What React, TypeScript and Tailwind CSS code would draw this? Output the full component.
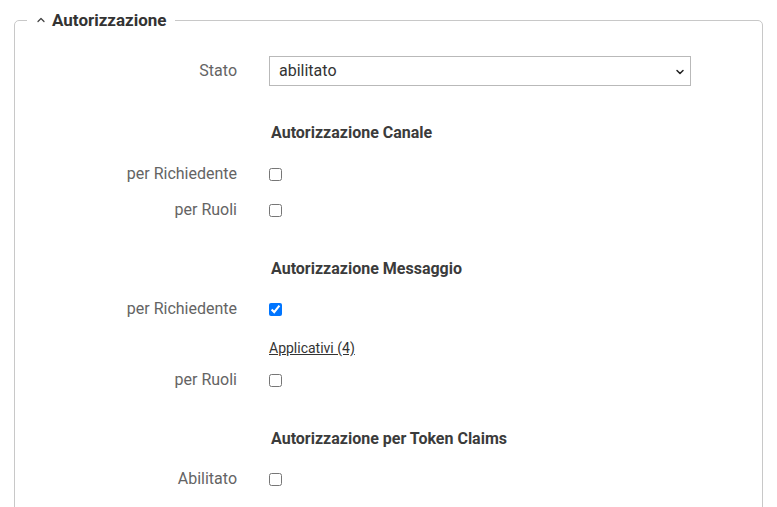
import { ChevronDown, ChevronUp } from "lucide-react";

function Row({ label, mt, children }: { label: string; mt: string; children: React.ReactNode }) {
  return (
    <div className={`flex items-center ${mt}`}>
      <div className="w-[222px] text-right text-[16px] leading-5 text-[#646464]">{label}</div>
      <div className="ml-[32px] flex items-center">{children}</div>
    </div>
  );
}

function Heading({ text, mt }: { text: string; mt: string }) {
  return (
    <div className={`flex ${mt}`}>
      <div className="w-[222px]" />
      <div className="ml-[34px] text-[16px] font-bold leading-5 text-[#3b3b3b]">{text}</div>
    </div>
  );
}

function Check({ checked = false }: { checked?: boolean }) {
  return <input type="checkbox" defaultChecked={checked} className="m-0 h-[13px] w-[13px]" />;
}

export default function App() {
  return (
    <div className="min-h-[507px] bg-white pl-[14px] pr-[14px] pt-[8px] font-['Roboto',sans-serif]">
      <fieldset className="m-0 h-[520px] w-[749px] rounded-[5px] border border-[#c8c8c8] px-0 pb-0 pt-0">
        <legend className="ml-[12px] flex h-6 items-center px-[8px] text-[17px] font-bold leading-6 text-[#333]">
          <ChevronUp size={12} strokeWidth={2.5} className="mr-[5px] text-[#444]" />
          Autorizzazione
        </legend>

        <Row label="Stato" mt="mt-[24px]">
          <div className="relative">
            <select className="h-[30px] w-[422px] appearance-none border border-[#b9b9b9] bg-white pl-[9px] text-[16px] text-[#333]">
              <option>abilitato</option>
              <option>disabilitato</option>
            </select>
            <ChevronDown size={12} strokeWidth={3} className="pointer-events-none absolute right-[5px] top-[10px] text-[#222]" />
          </div>
        </Row>

        <Heading text="Autorizzazione Canale" mt="mt-[37px]" />
        <Row label="per Richiedente" mt="mt-[21px]">
          <Check />
        </Row>
        <Row label="per Ruoli" mt="mt-[16px]">
          <Check />
        </Row>

        <Heading text="Autorizzazione Messaggio" mt="mt-[39px]" />
        <Row label="per Richiedente" mt="mt-[20px]">
          <Check checked />
        </Row>
        <div className="mt-[19px] flex">
          <div className="w-[222px]" />
          <a href="#" className="ml-[32px] text-[14px] leading-5 text-[#333] underline">
            Applicativi (4)
          </a>
        </div>
        <Row label="per Ruoli" mt="mt-[12px]">
          <Check />
        </Row>

        <Heading text="Autorizzazione per Token Claims" mt="mt-[39px]" />
        <Row label="Abilitato" mt="mt-[20px]">
          <Check />
        </Row>
      </fieldset>
    </div>
  );
}
